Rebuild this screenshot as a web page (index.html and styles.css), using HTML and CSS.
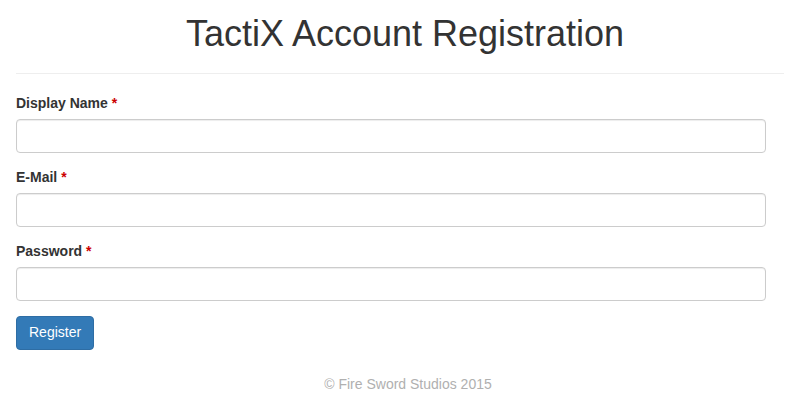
FILE: index.html
```html
<!DOCTYPE html>
<html lang="en">
<head>
    <meta charset="UTF-8">
    <meta name="viewport" content="width=device-width, initial-scale=1.0">
    <title>TactiX Account Registration</title>
    <link rel="stylesheet" href="styles.css">
</head>
<body>
    <div class="container">
        <h1 class="page-title">TactiX Account Registration</h1>
        <hr>

        <form class="register-form" onsubmit="return false;">
            <div class="form-group">
                <label for="displayName">Display Name <span class="required">*</span></label>
                <input type="text" id="displayName" class="form-control">
            </div>
            <div class="form-group">
                <label for="email">E-Mail <span class="required">*</span></label>
                <input type="email" id="email" class="form-control">
            </div>
            <div class="form-group">
                <label for="password">Password <span class="required">*</span></label>
                <input type="password" id="password" class="form-control">
            </div>
            <button type="submit" class="btn-primary">Register</button>
        </form>

        <footer class="footer">&copy; Fire Sword Studios 2015</footer>
    </div>
</body>
</html>
```

FILE: styles.css
```css
* {
    box-sizing: border-box;
}
body {
    margin: 0;
    font-family: "Liberation Sans", Arial, sans-serif;
    font-size: 14px;
    line-height: 1.42857;
    color: #333;
    background: #fff;
}
.container {
    padding: 0 1px 0 16px;
}
.page-title {
    margin: 14px 0 0;
    padding-left: 10px;
    font-size: 36px;
    font-weight: normal;
    line-height: 1.1;
    text-align: center;
}
hr {
    margin: 19px 0 20px;
    border: 0;
    border-top: 1px solid #eee;
}
.register-form {
    width: 750px;
}
.form-group {
    margin-bottom: 15px;
}
label {
    display: block;
    margin-bottom: 5px;
    font-weight: bold;
}
.required {
    color: #c00;
}
.form-control {
    display: block;
    width: 100%;
    height: 34px;
    padding: 6px 12px;
    font: inherit;
    color: #555;
    background: #fff;
    border: 1px solid #ccc;
    border-radius: 4px;
    box-shadow: inset 0 1px 1px rgba(0, 0, 0, .075);
}
.btn-primary {
    display: inline-block;
    height: 34px;
    padding: 6px 12px;
    font: inherit;
    color: #fff;
    background: #337ab7;
    border: 1px solid #2e6da4;
    border-radius: 4px;
    cursor: pointer;
}
.footer {
    margin-top: 25px;
    padding-left: 16px;
    text-align: center;
    color: #b0b0b0;
}
```
